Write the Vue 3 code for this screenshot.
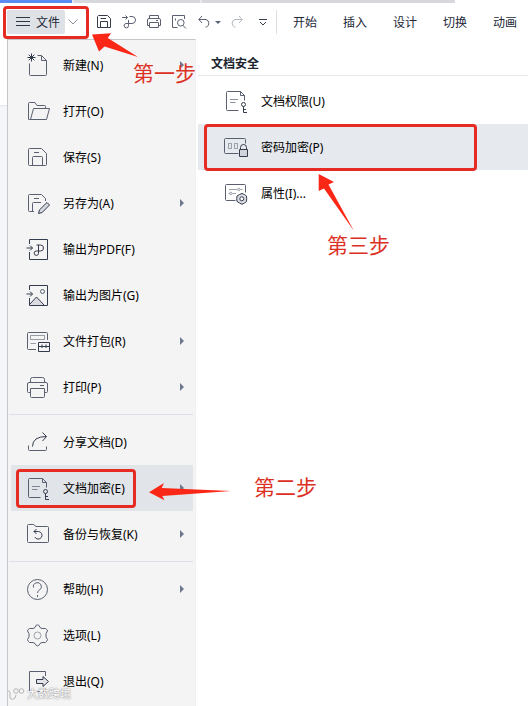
<script setup>
import { ref } from 'vue';

const tabs = ref(['开始', '插入', '设计', '切换', '动画']);

//文件菜单，按分隔线分组
const menuGroups = ref([
  [
    { icon: 'new', label: '新建(N)', arrow: true },
    { icon: 'open', label: '打开(O)' },
    { icon: 'save', label: '保存(S)' },
    { icon: 'saveAs', label: '另存为(A)', arrow: true },
    { icon: 'pdf', label: '输出为PDF(F)' },
    { icon: 'image', label: '输出为图片(G)' },
    { icon: 'pack', label: '文件打包(R)', arrow: true },
    { icon: 'print', label: '打印(P)', arrow: true },
  ],
  [
    { icon: 'share', label: '分享文档(D)' },
    { icon: 'encrypt', label: '文档加密(E)', arrow: true },
    { icon: 'backup', label: '备份与恢复(K)', arrow: true },
  ],
  [
    { icon: 'help', label: '帮助(H)', arrow: true },
    { icon: 'option', label: '选项(L)' },
    { icon: 'exit', label: '退出(Q)' },
  ],
]);
const activeMenu = ref('encrypt');

//右侧子菜单
const subItems = ref([
  { icon: 'encrypt', label: '文档权限(U)' },
  { icon: 'password', label: '密码加密(P)' },
  { icon: 'property', label: '属性(I)...' },
]);
const activeSub = ref('password');

//图标
const icons = {
  new: `<path d="M3.5 10.5V21.5Q3.5 22.5 4.500 22.500H19.500Q20.500 22.500 20.500 21.500V7.500L15.500 2.500H11.500M15.500 2.500V7.500H20.500"/><path class="dark" d="M5.500 .5V8.500M1.500 4.500H9.500M2.700 1.700L8.300 7.300M8.300 1.700L2.700 7.300"/>`,
  open: `<path d="M2.5 20.5V4.5Q2.5 3.5 3.5 3.5H9L11 6.5H18.5Q19.5 6.5 19.5 7.5V9.5M2.5 20Q2.5 20.5 3.5 20.5H20.5L23.5 9.5H7.5L4.5 20.5"/>`,
  save: `<path d="M3.5 3.5H15.5L20.5 8.5V19.5Q20.5 20.5 19.5 20.5H3.5Q2.5 20.5 2.5 19.5V4.5Q2.5 3.5 3.5 3.5ZM6.5 20.5V12.5Q6.5 11.5 7.5 11.5H15.5Q16.5 11.5 16.5 12.5V20.5M8 7.5H13"/>`,
  saveAs: `<path d="M8 20.5H3.5Q2.5 20.5 2.5 19.5V4.5Q2.5 3.5 3.5 3.5H15.5L19.5 7.5V10M6.5 20.5V12.5Q6.5 11.5 7.5 11.5H15M8 7.5H13"/><path class="dark" d="M12.5 22.5L13.5 18.8L21 11.5L23.5 14L16.2 21.5Z" fill="#d5d8de"/>`,
  pdf: `<path class="dark" d="M3.5 7V2.5H21.5V22.5H3.5V15M.5 11H6.5M4 8.5L6.5 11L4 13.5"/><path class="dark" d="M10.500 8H14.500A3 3 0 0 1 14.500 14H10.500A2.200 2.200 0 1 0 12.500 16.500V8"/>`,
  image: `<path d="M4 22L10.5 14L18 22Z" fill="#d9dbe0" stroke="none"/><path class="dark" d="M3.5 7V2.5H21.5V22.5H3.5V15M.5 11H6.5M4 8.5L6.5 11L4 13.5M4 21L10.5 14L18 22"/><circle cx="16.5" cy="8.5" r="2"/>`,
  pack: `<path d="M10 20.5H2.5Q1.5 20.5 1.5 19.5V4.5Q1.5 3.5 2.5 3.5H20.5Q21.5 3.5 21.5 4.5V11"/><path opacity=".6" d="M4.5 6.5H18.5V10.5H4.5ZM4.5 14.5H10"/><path class="dark" d="M12.5 13.5H23.5V22.5H12.5ZM13 17.5H23M16 15.5V19M20 15.5V19"/>`,
  print: `<path d="M4.5 7.5V4.5Q4.5 2.5 6.5 2.5H16.5Q18.5 2.5 18.5 4.5V7.5M4.5 17.5H2.5Q1.5 17.5 1.5 16.5V9Q1.5 7.5 3 7.5H20Q21.5 7.5 21.5 9V16.5Q21.5 17.5 20.5 17.5H18.5M4.5 13.5H18.5V21.5Q18.5 22.5 17.5 22.5H5.5Q4.5 22.5 4.5 21.5ZM14 10.5H18"/>`,
  share: `<path d="M2.5 15.5V19.5Q2.5 20.5 3.5 20.5H19.5Q20.5 20.5 20.5 19.5V16.5"/><path class="dark" d="M6.5 16.5Q6.5 6.5 20.5 6.5M16.5 2.5L20.5 6.5L16.5 11"/>`,
  encrypt: `<path d="M14.5 21.5H3.5Q2.5 21.5 2.5 20.5V3.5Q2.5 2.5 3.5 2.5H16.5L20.5 6.5V11.5M16.5 2.5V6.5H20.5"/><path opacity=".7" d="M6 10.5H14M6 13.5H11.5"/><path class="dark" d="M19.5 17.5V23.5H23M19.5 20.5H22"/><circle class="dark" cx="19.5" cy="15.5" r="2"/>`,
  backup: `<path d="M2.5 2.5H7.5L10 4.5H21.5Q22.5 4.5 22.5 5.5V19.500Q22.5 20.500 21.5 20.500H2.5Q1.5 20.500 1.5 19.500V3.5Q1.5 2.5 2.5 2.5Z"/><path class="dark" d="M8 9.500H12.5A3.800 3.800 0 1 1 8.800 15M10.500 7L8 9.500L10.500 12"/>`,
  help: `<circle cx="11.5" cy="12.5" r="10"/><path d="M7.5 10.5A4 4 0 1 1 13.5 13Q11.5 14 11.5 16M11.5 18V20"/>`,
  option: `<path d="M9 4.500L10.200 2.200Q11.500 1.600 12.800 2.200L14 4.500L16 5.500H19.500Q21.300 6.500 21.500 8L20 10.500V14L21.500 16.500Q21 18.500 19.500 19.500H16L14 20.500L12.800 22.500Q11.500 23.200 10.200 22.500L9 20.500L7 19.500H3.500Q2 18.500 1.500 16.500L3 14V10.500L1.500 8Q2 6 3.500 5.500H7Z"/><circle opacity=".55" cx="11.5" cy="12.5" r="3.5"/>`,
  exit: `<path d="M19.5 7V2.5H3.5V22.5H19.5V19"/><path class="dark" d="M10.5 10.5H17V7.5L22.5 12.5L17 17.5V14.5H10.5Z" fill="#e2e4e8"/>`,
  password: `<path d="M14.5 18.5H1.5Q.5 18.5 .5 17.5V4.5Q.5 3.5 1.5 3.5H20.5Q21.5 3.5 21.5 4.5V8.5"/><path opacity=".55" d="M4.5 8.5H7.5V13.5H4.5ZM10.5 8.5H13.5V13.5H10.5Z"/><path class="dark" d="M15.5 14.5H23.5V21.5H15.5ZM16.5 14.5V12.5A3 3 0 0 1 22.5 12.5V14.5"/><path d="M16 15H23V21H16Z" fill="#cfd3da" stroke="none"/>`,
  property: `<path d="M11.5 19.5H2.5Q1.5 19.5 1.5 18.5V4.5Q1.5 3.5 2.5 3.5H20.5Q21.5 3.5 21.5 4.5V11.5"/><path opacity=".6" d="M5 8.5H13M16.5 8.5H18.5M8.5 12.5H12M4.5 12.5H5.5"/><circle opacity=".6" cx="14.8" cy="8.5" r="1.2"/><circle opacity=".6" cx="6.8" cy="12.5" r="1.2"/><path class="dark" d="M15.5 13.5L18 12.5L20.5 13.5L22.5 15L22.7 17.8L22.5 20.5L20.5 22L18 23.3L15.5 22L13 20.5L12.7 17.8L13 15Z" fill="#d9dce2"/><circle class="dark" cx="17.8" cy="17.8" r="2" fill="#fff"/>`,
};

//切换选中项
const selectMenu = (name) => {
  activeMenu.value = name;
};
const selectSub = (name) => {
  activeSub.value = name;
};
</script>

<template>
  <div class="window">
    <div class="title-tabs">
      <span class="title-tab blue"></span>
      <span class="title-tab first"></span>
      <span class="title-tab second"></span>
    </div>

    <div class="toolbar">
      <div class="file-btn">
        <svg width="14" height="12" viewBox="0 0 14 12"><path d="M0 1.5H14M0 5.5H14M0 9.5H14"/></svg>
        <span>文件</span>
      </div>
      <svg class="chevron" width="10" height="6" viewBox="0 0 10 6"><path d="M.5 .5L5 5L9.5 .5"/></svg>
      <div class="quick">
        <svg class="strong" width="16" height="16" viewBox="0 0 16 16"><path d="M2.5 1.5H11.5L14.5 4.5V13.5H1.5V2.5ZM4.5 13.5V7.5H11.5V13.5M4.5 4.5H10"/></svg>
        <svg width="16" height="16" viewBox="0 0 16 16"><path d="M1 3.5H6.5M4.5 1.5L6.5 3.5L4.5 5.5M8.5 2.5H11A3.5 3.5 0 0 1 11 9.500H5A2.200 2.200 0 1 0 7.500 11.500V6"/></svg>
        <svg width="16" height="16" viewBox="0 0 16 16"><path d="M3.5 4.5V1.5H12.5V4.5M3.5 11.5H1.5V6Q1.5 4.5 3 4.5H13Q14.5 4.5 14.5 6V11.5H12.5M3.5 8.5H12.5V13.5H3.5ZM10 6.5H12"/></svg>
        <svg width="16" height="16" viewBox="0 0 16 16"><path d="M6.5 13.5H1.5V1.5H13.5V5M4.500 4.500V6.500M12 11.500L15 14.500"/><circle cx="9.800" cy="8.800" r="3.300"/></svg>
      </div>
      <svg class="undo" width="13" height="14" viewBox="0 0 13 14"><path d="M1 4.5H8A4 4 0 0 1 8.5 12H7.5M4 1L.8 4.5L4 8"/></svg>
      <i class="caret"></i>
      <svg class="redo" width="13" height="14" viewBox="0 0 13 14"><path d="M12 4.5H5A4 4 0 0 0 4.5 12H5.5M9 1L12.2 4.5L9 8"/></svg>
      <svg class="more" width="8" height="8" viewBox="0 0 8 8"><path d="M0 1.5H8M1 4L4 7L7 4"/></svg>
      <ul class="tabs">
        <li v-for="(tab, index) in tabs" v-bind:key="index">{{ tab }}</li>
      </ul>
    </div>

    <div class="main">
      <div class="side"></div>
      <div class="menu">
        <ul v-for="(group, groupIndex) in menuGroups" v-bind:key="groupIndex" class="group">
          <li
            v-for="item in group"
            v-bind:key="item.icon"
            v-bind:class="{ active: activeMenu === item.icon }"
            v-on:click="selectMenu(item.icon)"
          >
            <svg class="icon" viewBox="0 0 25 25" v-html="icons[item.icon]"></svg>
            <span class="label">{{ item.label }}</span>
            <i v-if="item.arrow" class="arrow"></i>
          </li>
        </ul>
      </div>
      <div class="panel">
        <h3>文档安全</h3>
        <ul>
          <li
            v-for="item in subItems"
            v-bind:key="item.icon"
            v-bind:class="{ active: activeSub === item.icon }"
            v-on:click="selectSub(item.icon)"
          >
            <svg class="icon" viewBox="0 0 25 25" v-html="icons[item.icon]"></svg>
            <span class="label">{{ item.label }}</span>
          </li>
        </ul>
      </div>
    </div>

    <!-- 步骤标注 -->
    <div class="mark mark-file"></div>
    <div class="mark mark-encrypt"></div>
    <div class="mark mark-password"></div>
    <svg class="pointers" width="528" height="706" viewBox="0 0 528 706">
      <path d="M92 34.5L111 33.3L107.8 38L138 57L104.5 46.5L99 51.5Z"/>
      <path d="M149 492.3L164 483L161.7 488L231 491L162.3 496L164.5 500.3Z"/>
      <path d="M318.7 174L334 182L328.5 184.5L354 231L324 188.5L318.7 191Z"/>
    </svg>
    <span class="step step-one">第一步</span>
    <span class="step step-two">第二步</span>
    <span class="step step-three">第三步</span>

    <div class="watermark">
      <svg width="20" height="15" viewBox="0 0 20 15"><path d="M2 3.5L4 5V11Q6 14 9 11L10 8"/><circle cx="10" cy="4" r="2.3"/><circle cx="15.5" cy="4" r="2.3"/></svg>
      <span>大数跨境</span>
    </div>
  </div>
</template>

<style>
body {
  margin: 0;
  background: #fff;
}
</style>

<style scoped>
.window {
  position: relative;
  width: 528px;
  height: 706px;
  overflow: hidden;
  display: flex;
  flex-direction: column;
  background: #fff;
  color: #101010;
  font-family: 'Noto Sans', 'Noto Sans CJK SC', sans-serif;
  font-size: 12px;
}
ul {
  margin: 0;
  padding: 0;
  list-style: none;
}
svg {
  flex: none;
  fill: none;
  stroke: #5a6070;
  stroke-width: 1;
}
.title-tabs {
  display: flex;
  gap: 2px;
  height: 3px;
  background: linear-gradient(90deg, #e8e9ed 455px, #fff 455px);
}
.title-tab {
  background: #d7d8dd;
}
.blue {
  width: 72px;
  background: #5b8bf0;
}
.first {
  width: 126px;
}
.second {
  width: 253px;
}
.toolbar {
  display: flex;
  align-items: center;
  height: 36px;
  padding: 2px 0 0 7px;
  box-sizing: border-box;
}
.file-btn {
  display: flex;
  align-items: center;
  gap: 6px;
  width: 58px;
  height: 24px;
  padding-left: 9px;
  box-sizing: border-box;
  background: #dee2e6;
  border-radius: 2px;
  color: #222838;
}
.file-btn span,
.tabs li {
  padding-bottom: 1px;
}
.file-btn svg {
  stroke: #303645;
}
.chevron {
  margin-left: 3px;
  stroke: #8c919c;
}
.quick {
  display: flex;
  gap: 9px;
  margin-left: 18px;
}
.strong {
  stroke: #363c4a;
}
.undo {
  margin-left: 11px;
}
.caret {
  border: 3px solid transparent;
  border-top-color: #5a6478;
  border-bottom: 0;
  margin-left: 4px;
}
.redo {
  margin-left: 9px;
  stroke: #b4b8bf;
}
.more {
  margin-left: 16px;
  stroke: #363c4a;
}
.tabs {
  display: flex;
  align-items: center;
  gap: 26px;
  height: 24px;
  margin-left: 9px;
  padding-left: 16px;
  border-left: 1px solid #dcdee2;
  color: #222838;
  white-space: nowrap;
}
.main {
  flex: 1;
  min-height: 0;
  display: flex;
}
.side {
  width: 7px;
  background: linear-gradient(#fff 66px, #e1e4ea 66px, #f5f6f9 68px);
}
.menu {
  width: 189px;
  box-sizing: border-box;
  padding-top: 2px;
  background: #f4f4f4;
  border: 1px solid #c4c6ca;
  border-bottom: 0;
  border-right-color: #f0f0f0;
  overflow: hidden;
}
.group + .group {
  border-top: 1px solid #dcdfe6;
  margin: 4px 2px 0 1px;
  padding-top: 4px;
}
.group li {
  display: flex;
  align-items: center;
  height: 46px;
  margin: 0 2px 0 3px;
  padding: 0 9px 0 15px;
}
.group + .group li {
  margin: 0 0 0 2px;
}
.menu li.active {
  background: #e1e4e8;
}
.icon {
  width: 25px;
  height: 25px;
}
.icon :deep(.dark) {
  stroke: #343b4d;
}
.label {
  margin-left: 12px;
  white-space: nowrap;
  color: #000;
}
.arrow {
  margin-left: auto;
  border: 4px solid transparent;
  border-left: 4px solid #6d788e;
  border-right: 0;
}
.panel {
  flex: 1;
  padding-left: 2px;
}
.panel h3 {
  height: 37px;
  margin: 0;
  padding: 7px 0 0 13px;
  line-height: 36px;
  box-sizing: border-box;
  border-bottom: 1px solid #e8e9eb;
  font-size: 12px;
  font-weight: 700;
  color: #20242e;
}
.panel ul {
  padding-top: 2px;
}
.panel li {
  display: flex;
  align-items: center;
  height: 46px;
  padding-left: 26px;
}
.panel li.active {
  background: #e6e9ee;
}
.mark {
  position: absolute;
  box-sizing: border-box;
  border: 3px solid #e62c22;
  border-radius: 4px;
}
.mark-file {
  left: 3px;
  top: 6px;
  width: 86px;
  height: 33px;
}
.mark-encrypt {
  left: 16px;
  top: 469px;
  width: 120px;
  height: 39px;
}
.mark-password {
  left: 204px;
  top: 124px;
  width: 273px;
  height: 47px;
}
.pointers {
  position: absolute;
  left: 0;
  top: 0;
  fill: #fb2716;
  stroke: none;
  pointer-events: none;
}
.step {
  position: absolute;
  font-size: 21px;
  line-height: 30px;
  color: #dc3024;
}
.step-one {
  left: 133px;
  top: 58px;
}
.step-two {
  left: 254px;
  top: 472px;
}
.step-three {
  left: 327px;
  top: 230px;
}
.watermark {
  position: absolute;
  left: 6px;
  top: 686px;
  display: flex;
  align-items: center;
  gap: 1px;
  font-size: 11px;
  line-height: 16px;
  color: #fff;
  text-shadow: 0 0 1px #888, 0 0 2px #999;
}
.watermark svg {
  stroke: #b5b5b5;
}
</style>
